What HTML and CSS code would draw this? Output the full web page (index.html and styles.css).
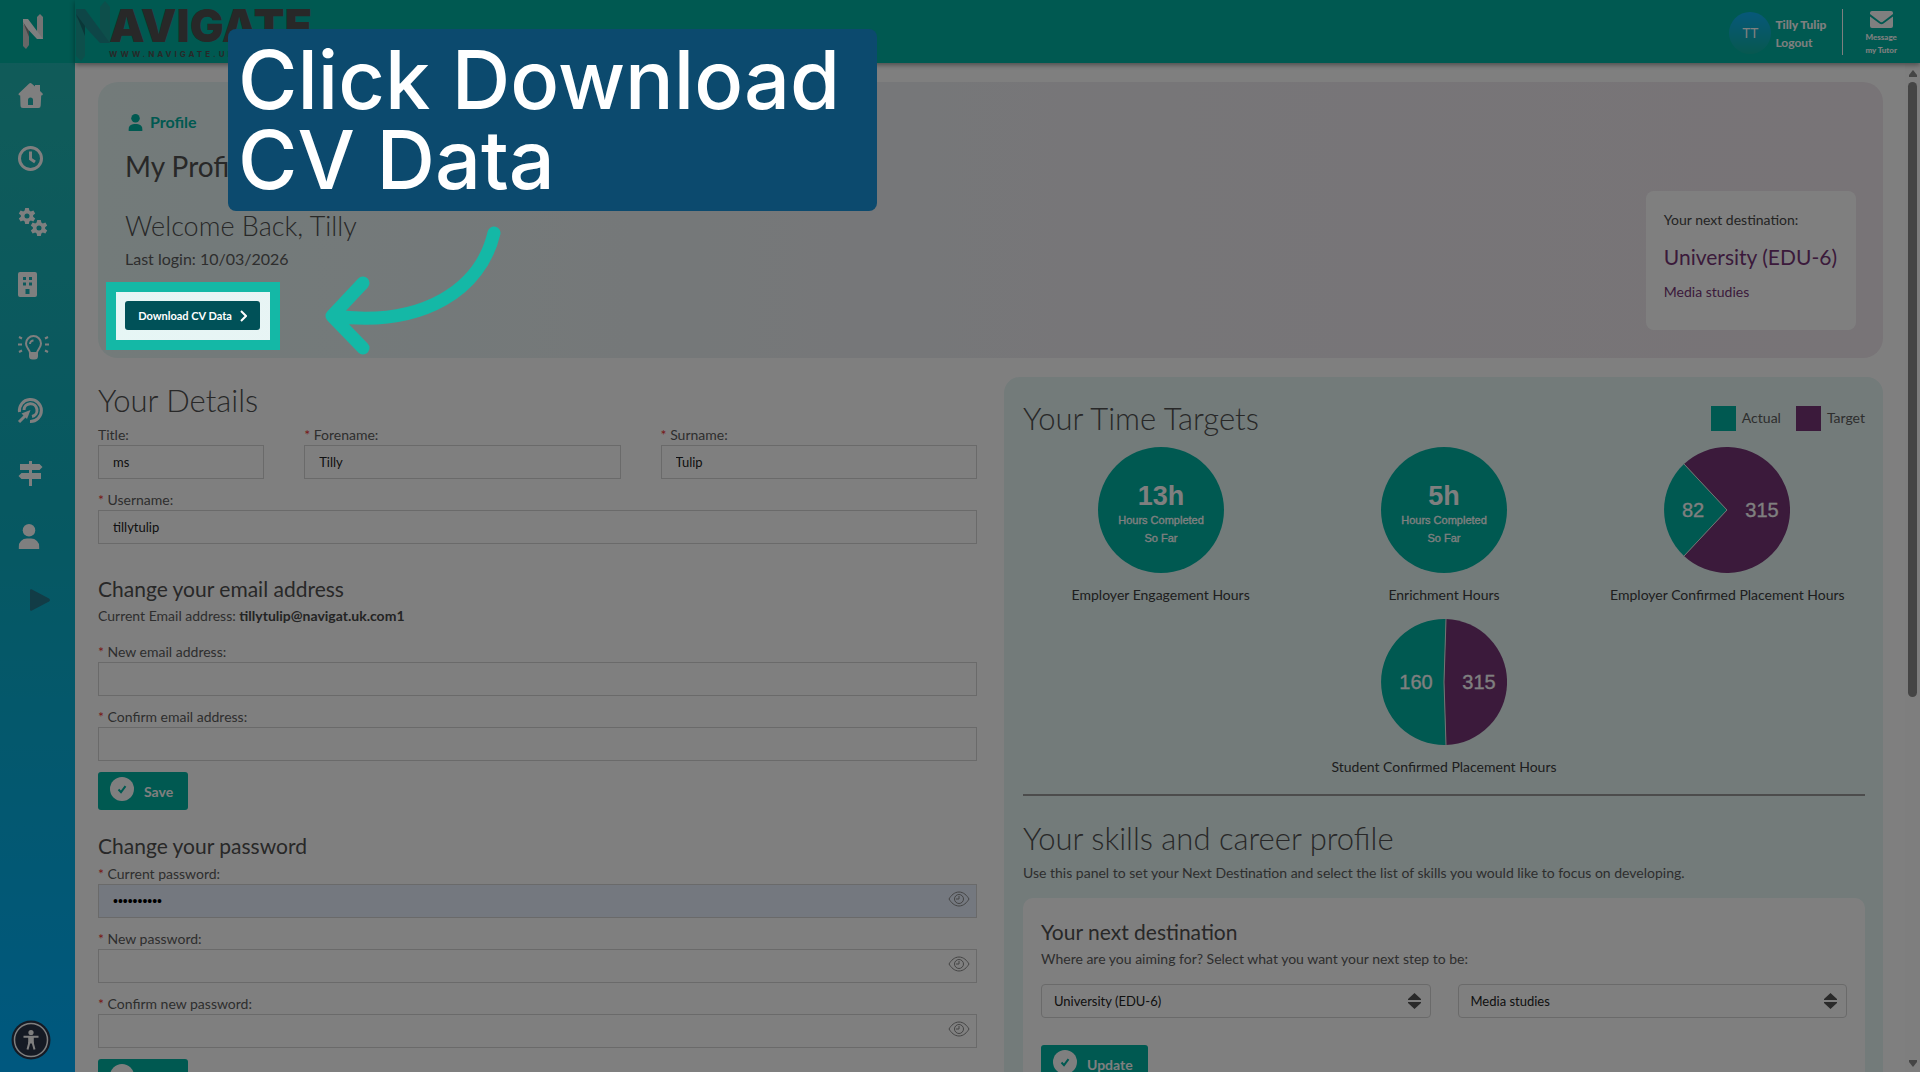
FILE: index.html
```html
<!DOCTYPE html>
<html lang="en">
<head>
<meta charset="utf-8">
<title>My Profile</title>
<meta name="viewport" content="width=device-width, initial-scale=1">
<link rel="stylesheet" href="styles.css">
</head>
<body>
<svg class="sprite" aria-hidden="true">
  <symbol id="i-user" viewBox="0 0 20 24"><circle cx="10" cy="6" r="6"/><path d="M0 24v-2a8 8 0 0 1 8-8h4a8 8 0 0 1 8 8v2z"/></symbol>
  <symbol id="i-check" viewBox="0 0 24 24"><circle cx="12" cy="12" r="12" fill="#fff"/><path d="M8.500 12.500l2.500 2.700 4.500-6" fill="none" stroke="#00b2a2" stroke-width="2"/></symbol>
  <symbol id="i-eye" viewBox="0 0 22 16"><path d="M1 8c2-3.500 5.500-7 10-7s8 3.500 10 7c-2 3.500-5.500 7-10 7S3 11.500 1 8z"/><circle cx="11" cy="8" r="4.500"/><path d="M11 5v3H8"/></symbol>
  <symbol id="i-gear" viewBox="-10 -10 20 20"><path fill-rule="evenodd" d="M-2-9h4l.6 3 1.600.9 2.900-1 2 3.400-2.300 2v1.400l2.300 2-2 3.400-2.900-1-1.600.9L2 9h-4l-.6-3-1.600-.9-2.900 1-2-3.400 2.300-2V-.7l-2.300-2 2-3.400 2.900 1 1.600-.9zM0-2.800a2.800 2.800 0 1 0 0 5.600 2.800 2.800 0 0 0 0-5.600z"/></symbol>
</svg>
<div class="app">
  <nav class="side" aria-label="Main">
    <a class="side-logo" href="#" aria-label="Navigate">
      <svg width="22" height="36" viewBox="0 0 22 36"><path d="M1 6h6v25l-3 4-3-3z" fill="#cfcfcf"/><path d="M15 3l3-3 3 3v22h-6z" fill="#e8e8e8"/><path d="M1 5h5l15 20h-6L1 10z" fill="#fff"/><path d="M1 8l6 9v6z" fill="#888"/></svg>
    </a>
    <ul class="side-list">
      <li><a href="#" aria-label="Home"><svg width="25" height="25" viewBox="0 0 25 25"><path fill-rule="evenodd" d="M11 .8a2 2 0 0 1 2.800 0L17 3.600V2h5v6l2.400 2.300c.8.800.4 2.200-1.200 2.200l-.5 10A2.500 2.500 0 0 1 20 25H5a2.500 2.500 0 0 1-2.500-2.500l-.3-10c-1.600 0-2.200-1.400-1.200-2.300zM10 22h5v-5a2.500 2.500 0 0 0-5 0z"/></svg></a></li>
      <li><a href="#" aria-label="Time"><svg width="25" height="25" viewBox="0 0 25 25" class="line"><circle cx="12.500" cy="12.500" r="11"/><path d="M12.500 5.500v7.500l4.500 3"/></svg></a></li>
      <li><a href="#" aria-label="Skills"><svg width="30" height="30" viewBox="0 0 30 30"><use href="#i-gear" x="0" y="0" width="18" height="18"/><use href="#i-gear" x="12" y="12" width="18" height="18"/></svg></a></li>
      <li><a href="#" aria-label="Employers"><svg width="19" height="25" viewBox="0 0 19 25"><path fill-rule="evenodd" d="M2 0h15a2 2 0 0 1 2 2v21a2 2 0 0 1-2 2H2a2 2 0 0 1-2-2V2a2 2 0 0 1 2-2zM5 5v3h3V5zm6 0v3h3V5zM5 10.500v3h3v-3zm6 0v3h3v-3zM7.500 17v5h4v-5z"/></svg></a></li>
      <li><a href="#" aria-label="Ideas"><svg width="31" height="25" viewBox="0 0 31 25" class="line bulb"><path d="M12 18c0-3-4-5-4-9.500a7.500 7.500 0 0 1 15 0c0 4.500-4 6.500-4 9.500z"/><path d="M12 9a3.500 3.500 0 0 1 3.500-3.500M1 2l3 1.500M0 9.500h4M1 17l3-1.500M30 2l-3 1.500M31 9.500h-4M30 17l-3-1.500"/><path d="M11 18h9v3a3.500 3.500 0 0 1-3.500 3.500h-2A3.500 3.500 0 0 1 11 21z" fill="#fff" stroke="none"/></svg></a></li>
      <li><a href="#" aria-label="Goals"><svg width="25" height="25" viewBox="0 0 25 25" class="line"><path d="M1.500 14A11 11 0 1 1 12 23.500M6 12a6.500 6.500 0 1 1 8 6.500"/><path d="M1 24l7-7" /><path d="M3.500 15.500l9-3.500-3.500 9z" fill="#fff" stroke="none"/></svg></a></li>
      <li><a href="#" aria-label="Pathways"><svg width="25" height="25" viewBox="0 0 25 25"><path d="M11 0h3v3h7.500L24.500 6l-3 3H14v3h9v6h-9v7h-3v-7H3.500L.5 15l3-3H11V9H2V3h9z"/></svg></a></li>
      <li><a href="#" aria-label="Profile"><svg width="22" height="25" viewBox="0 0 20 24"><use href="#i-user"/></svg></a></li>
      <li><a href="#" aria-label="Expand menu" class="expand"><svg width="20" height="22" viewBox="0 0 20 22"><path d="M0 1.500C0 .3 1 0 2 .5l17 9c1.300.7 1.300 2.300 0 3l-17 9c-1 .5-2 .2-2-1z"/></svg></a></li>
    </ul>
  </nav>

  <header class="top">
    <a class="brand" href="#">
      <svg width="36" height="62" viewBox="0 0 36 62" aria-hidden="true"><path d="M1 10h9v46l-4 5-5-5z" fill="#1b9e96"/><path d="M25 7l5-6 5 6v36H25z" fill="#1b9e96"/><path d="M1 9h9l25 34H25L1 17z" fill="#1c8d8f"/><path d="M1 14l9 12v10z" fill="#156f70"/></svg>
      <span class="brand-words"><span class="brand-name">AVIGATE</span><span class="brand-url">WWW.NAVIGATE.UK</span></span>
    </a>
    <div class="account">
      <span class="avatar">TT</span>
      <span class="who"><strong>Tilly Tulip</strong><a href="#">Logout</a></span>
      <a class="message" href="#"><svg width="23" height="17" viewBox="0 0 23 17"><path d="M2 0h19a2 2 0 0 1 2 2v1L12.500 11a2 2 0 0 1-2 0L0 3V2a2 2 0 0 1 2-2zM0 5.500l9.500 7a3.500 3.500 0 0 0 4 0l9.500-7V15a2 2 0 0 1-2 2H2a2 2 0 0 1-2-2z" fill="#fff"/></svg><span>Message<br>my Tutor</span></a>
    </div>
  </header>

  <main class="content">
    <section class="hero">
      <div class="hero-text">
        <p class="crumb"><svg width="15" height="17" viewBox="0 0 20 24"><use href="#i-user"/></svg>Profile</p>
        <h1>My Profile</h1>
        <p class="welcome">Welcome Back, Tilly</p>
        <p class="last">Last login: 10/03/2026</p>
        <button class="download" type="button">Download CV Data<svg width="7" height="12" viewBox="0 0 7 12"><path d="M1 1l5 5-5 5" fill="none" stroke="#fff" stroke-width="2"/></svg></button>
      </div>
      <aside class="next">
        <p class="next-label">Your next destination:</p>
        <p class="next-name">University (EDU-6)</p>
        <p class="next-sub">Media studies</p>
      </aside>
    </section>

    <div class="columns">
      <form class="details">
        <h2>Your Details</h2>
        <div class="name-row">
          <div class="field"><label for="title">Title:</label><input id="title" type="text" value="ms"></div>
          <div class="field"><label for="fore"><i>*</i> Forename:</label><input id="fore" type="text" value="Tilly"></div>
          <div class="field"><label for="sur"><i>*</i> Surname:</label><input id="sur" type="text" value="Tulip"></div>
        </div>
        <div class="field"><label for="user"><i>*</i> Username:</label><input id="user" type="text" value="tillytulip"></div>

        <h3 class="email-head">Change your email address</h3>
        <p class="current">Current Email address: <strong>tillytulip@navigat.uk.com1</strong></p>
        <div class="field"><label for="mail"><i>*</i> New email address:</label><input id="mail" type="email"></div>
        <div class="field"><label for="mail2"><i>*</i> Confirm email address:</label><input id="mail2" type="email"></div>
        <button class="save" type="button"><svg width="24" height="24"><use href="#i-check"/></svg><span>Save</span></button>

        <h3 class="pass-head">Change your password</h3>
        <div class="field secret"><label for="pw"><i>*</i> Current password:</label><input id="pw" class="filled" type="password" value="abcdefghij"><svg class="eye" width="22" height="16"><use href="#i-eye"/></svg></div>
        <div class="field secret"><label for="pw1"><i>*</i> New password:</label><input id="pw1" type="password"><svg class="eye" width="22" height="16"><use href="#i-eye"/></svg></div>
        <div class="field secret"><label for="pw2"><i>*</i> Confirm new password:</label><input id="pw2" type="password"><svg class="eye" width="22" height="16"><use href="#i-eye"/></svg></div>
        <button class="save" type="button"><svg width="24" height="24"><use href="#i-check"/></svg><span>Save</span></button>
      </form>

      <section class="panel">
        <div class="panel-head">
          <h2>Your Time Targets</h2>
          <ul class="legend"><li><span class="swatch actual"></span>Actual</li><li><span class="swatch target"></span>Target</li></ul>
        </div>
        <div class="charts">
          <figure><svg width="126" height="126" viewBox="-63 -63 126 126"><circle r="63" fill="#00b2a2"/><text class="big" y="-5">13h</text><text class="small" y="14">Hours Completed</text><text class="small" y="32">So Far</text></svg><figcaption>Employer Engagement Hours</figcaption></figure>
          <figure><svg width="126" height="126" viewBox="-63 -63 126 126"><circle r="63" fill="#00b2a2"/><text class="big" y="-5">5h</text><text class="small" y="14">Hours Completed</text><text class="small" y="32">So Far</text></svg><figcaption>Enrichment Hours</figcaption></figure>
          <figure><svg width="126" height="126" viewBox="-63 -63 126 126"><path d="M0 0L-43-46A63 63 0 1 1-43 46z" fill="#763576"/><path d="M0 0L-43 46A63 63 0 0 1-43-46z" fill="#00b2a2"/><path d="M-43-46L0 0L-43 46" fill="none" stroke="#e6e6e6"/><text class="num" x="-34" y="7">82</text><text class="num" x="35" y="7">315</text></svg><figcaption>Employer Confirmed Placement Hours</figcaption></figure>
          <figure class="middle"><svg width="126" height="126" viewBox="-63 -63 126 126"><path d="M0 0L2-62.970A63 63 0 0 1 2 62.970z" fill="#763576"/><path d="M0 0L2 62.970A63 63 0 1 1 2-62.970z" fill="#00b2a2"/><path d="M2-62.970L0 0L2 62.970" fill="none" stroke="#e6e6e6"/><text class="num" x="-28" y="7">160</text><text class="num" x="35" y="7">315</text></svg><figcaption>Student Confirmed Placement Hours</figcaption></figure>
        </div>
        <hr>
        <h2>Your skills and career profile</h2>
        <p class="intro">Use this panel to set your Next Destination and select the list of skills you would like to focus on developing.</p>
        <div class="card">
          <h3>Your next destination</h3>
          <p class="intro" id="aim">Where are you aiming for? Select what you want your next step to be:</p>
          <div class="selects">
            <div class="select"><select aria-labelledby="aim"><option>University (EDU-6)</option></select><svg width="13" height="16" viewBox="0 0 13 16"><path d="M6.500 0L13 6v1H0V6zM6.500 16L13 10V9H0v1z"/></svg></div>
            <div class="select"><select aria-label="Subject"><option>Media studies</option></select><svg width="13" height="16" viewBox="0 0 13 16"><path d="M6.500 0L13 6v1H0V6zM6.500 16L13 10V9H0v1z"/></svg></div>
          </div>
          <button class="save" type="button"><svg width="24" height="24"><use href="#i-check"/></svg><span>Update</span></button>
        </div>
      </section>
    </div>
  </main>
  <div class="scrollbar" aria-hidden="true"><svg width="8" height="7" viewBox="0 0 8 7"><path d="M4 0l4 5v2H0V5z"/></svg><span class="track"><span class="thumb"></span></span><svg width="8" height="7" viewBox="0 0 8 7"><path d="M4 7l4-5V0H0v2z"/></svg></div>
</div>
<button class="access" type="button" aria-label="Accessibility options"><svg width="40" height="40" viewBox="-20 -20 40 40"><circle r="19.500" fill="#2b3448"/><circle r="16.500" fill="none" stroke="#fff" stroke-width="1.500"/><circle cy="-7.500" r="2.600" fill="#fff"/><path d="M-7.500-3.200h15M-1.500 2L-3.500 9.500M1.500 2L3.500 9.500" fill="none" stroke="#fff" stroke-width="2"/><path d="M-2.800-3.500h5.600v7h-5.600z" fill="#fff"/></svg></button>

<div class="spotlight"></div>
<div class="callout">Click Download CV Data</div>
<svg class="arrow" width="180" height="136" viewBox="324 224 180 136"><path d="M494 233C481 288 425 328 333 316M363 283L332 316L363 348"/></svg>
</body>
</html>
```
FILE: styles.css
```css
* { box-sizing: border-box; margin: 0; padding: 0; }
body { font: 14px/22px Lato, "Noto Sans", sans-serif; color: #5c5c5c; background: #fff; overflow: hidden; }
a { color: inherit; text-decoration: none; }
ul { list-style: none; }
button, input, select { font: inherit; }
h1, h2, h3 { font-weight: 400; color: #505050; }
h2 { font-size: 31px; line-height: 40px; font-weight: 300; }
h3 { font-size: 21px; line-height: 28px; }
.sprite { position: absolute; width: 0; height: 0; }

.app {
  display: grid;
  grid-template: 63px minmax(0, 1fr) / 75px minmax(0, 1fr) 15px;
  height: 100vh;
}

.side { grid-row: 1 / 3; background: linear-gradient(#24b8b0, #0db0c4 50%, #00b0ff); }
.side-logo { display: flex; height: 63px; padding: 14px 0 0 22px; background: #00b2a2; }
.side-list { display: flex; flex-direction: column; padding-top: 1px; }
.side-list a { display: flex; align-items: center; height: 63px; padding-left: 18px; }
.side-list svg { fill: #fff; overflow: visible; }
.side-list .line { fill: none; stroke: #fff; stroke-width: 3; }
.side-list .bulb { stroke-width: 2; }
.side-list .expand { padding-left: 30px; }
.side-list .expand svg { fill: #24788c; }

.top {
  grid-column: 2 / 4;
  display: flex;
  justify-content: space-between;
  background: #00b2a2;
  box-shadow: 0 2px 5px rgba(0, 0, 0, .4);
  z-index: 1;
  color: #fff;
}
.brand { display: flex; }
.brand-words { display: flex; flex-direction: column; color: #505050; margin-left: -2px; }
.brand-name { font: 900 45px/34px Inter, sans-serif; margin-top: 9px; }
.brand-url { font: 700 8px/12px Inter, sans-serif; letter-spacing: 3px; margin-top: 5px; }
.account { display: flex; align-items: flex-start; padding: 9px 23px 0 0; }
.avatar {
  width: 42px; height: 42px; margin: 3px 4px 0 0;
  border-radius: 50%;
  background: linear-gradient(#0fb0f4, #0fb0a0);
  font: 14px/42px "Noto Sans", sans-serif;
  text-align: center;
}
.who { display: flex; flex-direction: column; font-size: 12px; line-height: 18px; padding: 7px 16px 0 0; font-weight: 700; }
.who strong { font-weight: 900; }
.message {
  display: flex; flex-direction: column; align-items: center; gap: 3px;
  height: 46px; padding: 2px 0 0 22px;
  border-left: 1px solid #fff;
  font-size: 8px; line-height: 13px; font-weight: 900; text-align: center;
}
.message svg { flex: none; }

.content { padding: 19px 22px 0 23px; overflow: hidden; }
.hero {
  display: flex;
  justify-content: space-between;
  align-items: flex-end;
  padding: 29px 27px 28px;
  border-radius: 20px;
  background: linear-gradient(90deg, #e6f6f5, #efecf1 60%, #f0e8ee);
}
.hero-text { display: flex; flex-direction: column; align-items: flex-start; }
.crumb { display: flex; align-items: center; gap: 7px; padding-left: 3px; font-size: 16px; font-weight: 700; color: #00b2a2; }
.crumb svg { fill: currentColor; }
h1 { font-size: 28px; line-height: 36px; margin-top: 15px; }
.welcome { font-size: 27px; line-height: 36px; font-weight: 300; margin-top: 24px; color: #505050; }
.last { font-size: 16px; margin-top: 4px; }
.download {
  display: flex; align-items: center; justify-content: center; gap: 8px;
  width: 135px; height: 29px; margin-top: 31px;
  border: 0; border-radius: 3px;
  background: #005158; color: #fff;
  font-size: 11px; font-weight: 700; white-space: nowrap;
}
.next { padding: 18px 19px 27px 18px; border-radius: 8px; background: #fff; color: #763576; }
.next-label { color: #484848; }
.next-name { font-size: 21px; line-height: 28px; margin-top: 12px; }
.next-sub { margin-top: 10px; }

.columns { display: grid; grid-template-columns: minmax(0, 1fr) minmax(0, 1fr); gap: 27px; margin-top: 19px; }
.details { padding-top: 3px; }
.details h2 { margin-bottom: 4px; }
.name-row { display: grid; grid-template-columns: 166fr 316fr 316fr; gap: 40px; }
.field { display: flex; flex-direction: column; margin-bottom: 10px; position: relative; }
.name-row .field { min-width: 0; }
.field label { line-height: 21px; }
.field i { color: #e33; font-style: normal; }
.field input {
  width: 100%; height: 34px; padding: 0 14px;
  border: 1px solid #d4d4d4; background: #fff;
  font-size: 13px; color: #222;
}
.field .filled { background: #e8f0fe; font: 14px "Liberation Sans", sans-serif; color: #000; }
.eye { position: absolute; right: 7px; bottom: 11px; fill: none; stroke: #888; }
.email-head { margin-top: 31px; }
.current { margin: 2px 0 14px; }
.current strong { color: #484848; }
.save {
  display: flex; align-items: flex-start; gap: 10px;
  height: 38px; margin-top: 11px; padding: 5px 15px 0 12px;
  border: 0; border-radius: 3px;
  background: #00b2a2; color: #fff;
  font-weight: 700;
}
.save span { line-height: 30px; }
.pass-head { margin: 22px 0 3px; }

.panel { padding: 21px 18px 0 19px; border-radius: 16px 16px 0 0; background: #e6f6f5; }
.panel-head { display: flex; justify-content: space-between; align-items: center; }
.legend { display: flex; gap: 15px; }
.legend li { display: flex; align-items: center; gap: 6px; }
.swatch { width: 25px; height: 25px; }
.actual { background: #00b2a2; }
.target { background: #763576; }
.charts { display: grid; grid-template-columns: repeat(3, 1fr); row-gap: 14px; margin: 9px -4px 0; }
.charts figure { display: flex; flex-direction: column; align-items: center; gap: 11px; }
.charts .middle { grid-column: 2; }
.charts figcaption { line-height: 21px; color: #3c3c3c; white-space: nowrap; }
.charts text { fill: #fff; text-anchor: middle; font-family: "Liberation Sans", sans-serif; }
.charts .big { font-size: 27px; font-weight: 700; }
.charts .small { font-size: 11px; stroke: #fff; stroke-width: .3px; }
.charts .num { font-size: 20px; stroke: #fff; stroke-width: .3px; }
hr { border: 0; border-top: 2px solid #999; margin: 17px 0 22px; }
.panel > .intro { margin-top: 4px; }
.card { margin-top: 14px; padding: 20px 18px 40px; border-radius: 10px 10px 0 0; background: #fff; }
.card .intro { margin: 2px 0 14px; }
.selects { display: grid; grid-template-columns: 1fr 1fr; gap: 27px; }
.select { display: grid; align-items: center; }
.select select {
  grid-area: 1 / 1; width: 100%; height: 34px; padding: 0 12px;
  border: 1px solid #d4d4d4; border-radius: 4px; background: #fff;
  appearance: none; font-size: 13px; color: #222;
}
.select svg { grid-area: 1 / 1; justify-self: end; margin-right: 10px; fill: #555; pointer-events: none; }
.card .save { margin-top: 27px; }

.scrollbar { display: flex; flex-direction: column; align-items: center; justify-content: space-between; padding: 7px 0 5px; background: #fcfcfc; }
.scrollbar svg { fill: #8b8b8b; }
.track { flex: 1; margin: 5px 0 2px; }
.thumb { display: block; width: 9px; height: 63%; border-radius: 5px; background: #8b8b8b; }

.access { position: fixed; left: 11px; bottom: 12px; width: 40px; height: 40px; border: 0; background: none; }

/* Guided tour layer */
.spotlight {
  position: fixed; left: 106px; top: 282px; width: 174px; height: 68px;
  border: 10px solid #14b8a6;
  box-shadow: 0 0 0 3000px rgba(0, 0, 0, .5);
  z-index: 10; pointer-events: none;
}
.callout {
  position: fixed; left: 228px; top: 29px; width: 649px;
  padding: 11px 10px;
  border-radius: 8px;
  background: #0c4a6e; color: #fff;
  font: 500 81px/80px Inter, sans-serif;
  z-index: 11;
}
.arrow { position: fixed; left: 324px; top: 224px; z-index: 11; fill: none; stroke: #14b8a6; stroke-width: 13; stroke-linecap: round; stroke-linejoin: round; }
```
